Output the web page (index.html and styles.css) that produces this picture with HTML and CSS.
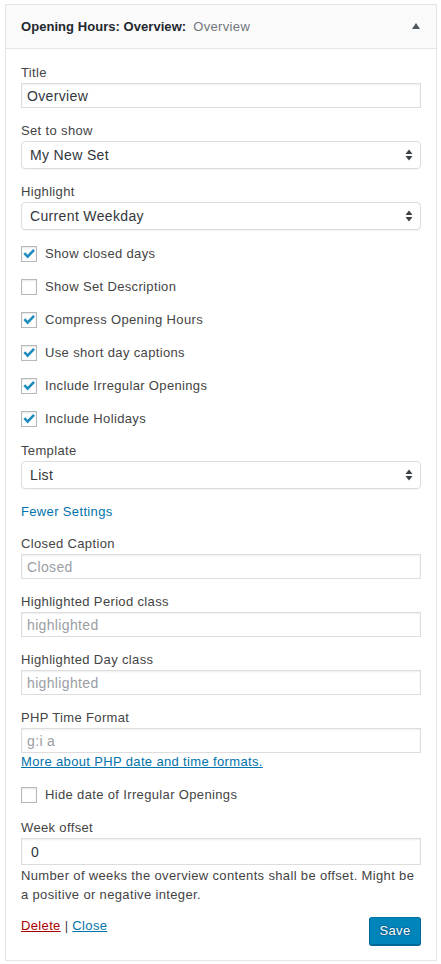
FILE: index.html
```html
<!DOCTYPE html>
<html>
<head>
<meta charset="utf-8">
<link rel="stylesheet" href="styles.css">
</head>
<body>
<div class="widget">
  <div class="widget-top">
    <h3 class="widget-title">Opening Hours: Overview:<span class="in-title">Overview</span></h3>
    <span class="toggle"></span>
  </div>
  <div class="widget-inside">
    <div class="field first">
      <label>Title</label>
      <input class="text" type="text" value="Overview">
    </div>
    <div class="field">
      <label>Set to show</label>
      <div class="select"><span>My New Set</span><svg class="updown" width="8" height="12" viewBox="0 0 8 12"><path d="M4 0.5 L7.5 5 H0.5 Z M4 11.5 L7.5 7 H0.5 Z" fill="#3c4146"/></svg></div>
    </div>
    <div class="field">
      <label>Highlight</label>
      <div class="select"><span>Current Weekday</span><svg class="updown" width="8" height="12" viewBox="0 0 8 12"><path d="M4 0.5 L7.5 5 H0.5 Z M4 11.5 L7.5 7 H0.5 Z" fill="#3c4146"/></svg></div>
    </div>
    <div class="check checked"><span class="box"><svg width="14" height="14" viewBox="0 0 14 14"><path d="M1.4 7.1 L3.3 5.3 L5.6 7.8 L11.1 2 L13 3.8 L5.6 11.6 Z" fill="#1e8cbe"/></svg></span><span>Show closed days</span></div>
    <div class="check"><span class="box"></span><span>Show Set Description</span></div>
    <div class="check checked"><span class="box"><svg width="14" height="14" viewBox="0 0 14 14"><path d="M1.4 7.1 L3.3 5.3 L5.6 7.8 L11.1 2 L13 3.8 L5.6 11.6 Z" fill="#1e8cbe"/></svg></span><span>Compress Opening Hours</span></div>
    <div class="check checked"><span class="box"><svg width="14" height="14" viewBox="0 0 14 14"><path d="M1.4 7.1 L3.3 5.3 L5.6 7.8 L11.1 2 L13 3.8 L5.6 11.6 Z" fill="#1e8cbe"/></svg></span><span>Use short day captions</span></div>
    <div class="check checked"><span class="box"><svg width="14" height="14" viewBox="0 0 14 14"><path d="M1.4 7.1 L3.3 5.3 L5.6 7.8 L11.1 2 L13 3.8 L5.6 11.6 Z" fill="#1e8cbe"/></svg></span><span>Include Irregular Openings</span></div>
    <div class="check checked"><span class="box"><svg width="14" height="14" viewBox="0 0 14 14"><path d="M1.4 7.1 L3.3 5.3 L5.6 7.8 L11.1 2 L13 3.8 L5.6 11.6 Z" fill="#1e8cbe"/></svg></span><span>Include Holidays</span></div>
    <div class="field">
      <label>Template</label>
      <div class="select"><span>List</span><svg class="updown" width="8" height="12" viewBox="0 0 8 12"><path d="M4 0.5 L7.5 5 H0.5 Z M4 11.5 L7.5 7 H0.5 Z" fill="#3c4146"/></svg></div>
    </div>
    <div class="field line"><a class="plain-link" href="#">Fewer Settings</a></div>
    <div class="field">
      <label>Closed Caption</label>
      <input class="text" type="text" placeholder="Closed">
    </div>
    <div class="field">
      <label>Highlighted Period class</label>
      <input class="text" type="text" placeholder="highlighted">
    </div>
    <div class="field">
      <label>Highlighted Day class</label>
      <input class="text" type="text" placeholder="highlighted">
    </div>
    <div class="field">
      <label>PHP Time Format</label>
      <input class="text" type="text" placeholder="g:i a">
      <a class="under-link" href="#">More about PHP date and time formats.</a>
    </div>
    <div class="check"><span class="box"></span><span>Hide date of Irregular Openings</span></div>
    <div class="field week">
      <label>Week offset</label>
      <input class="text number" type="text" value="0">
      <p class="desc">Number of weeks the overview contents shall be offset. Might be a positive or negative integer.</p>
    </div>
    <div class="controls">
      <div class="links"><a class="delete" href="#">Delete</a> | <a class="close" href="#">Close</a></div>
      <button class="save">Save</button>
    </div>
  </div>
</div>
</body>
</html>
```
FILE: styles.css
```css
html, body {
  margin: 0;
  padding: 0;
  background: #fff;
}
body {
  font-family: "Liberation Sans", Arial, sans-serif;
  font-size: 13px;
  color: #444;
  letter-spacing: 0.35px;
}
.widget {
  margin: 4px 4px 0 5px;
  border: 1px solid #e5e5e5;
  box-shadow: 0 1px 1px rgba(0,0,0,0.04);
  background: #fff;
}
.widget-top {
  height: 43px;
  background: #fafafa;
  border-bottom: 1px solid #e5e5e5;
  display: flex;
  align-items: center;
  justify-content: space-between;
  padding: 0 16px 0 15px;
}
.widget-title {
  margin: 0;
  font-size: 13px;
  font-weight: bold;
  color: #23282d;
  line-height: 17px;
  letter-spacing: 0.05px;
}
.in-title {
  font-weight: normal;
  color: #72777c;
  margin-left: 7px;
  letter-spacing: 0.35px;
}
.toggle {
  width: 0;
  height: 0;
  border-left: 4px solid transparent;
  border-right: 4px solid transparent;
  border-bottom: 6px solid #50575e;
  margin-top: -2px;
}
.widget-inside {
  padding: 15px 15px 15px 15px;
}
.field {
  margin-top: 14px;
}
.field.first {
  margin-top: 0;
}
.field label {
  display: block;
  line-height: 18px;
  margin-bottom: 1px;
  color: #444;
}
.text {
  display: block;
  box-sizing: border-box;
  width: 100%;
  height: 25px;
  margin: 0;
  padding: 0 5px;
  border: 1px solid #ddd;
  box-shadow: inset 0 1px 2px rgba(0,0,0,0.07);
  font-family: inherit;
  font-size: 14px;
  letter-spacing: 0.35px;
  color: #32373c;
  background: #fff;
  outline: none;
}
.text::placeholder {
  color: #9a9ea3;
}
.number {
  height: 27px;
  padding-left: 9px;
}
.select {
  box-sizing: border-box;
  height: 28px;
  border: 1px solid #dcdcdc;
  border-radius: 4px;
  background: #fff;
  box-shadow: 0 1px 1px rgba(0,0,0,0.04);
  display: flex;
  align-items: center;
  justify-content: space-between;
  padding: 0 7px 0 8px;
  font-size: 14px;
  color: #32373c;
}
.check {
  margin-top: 14px;
  height: 19px;
  line-height: 19px;
  display: flex;
  align-items: center;
  color: #444;
}
.box {
  box-sizing: border-box;
  width: 16px;
  height: 16px;
  border: 1px solid #b4b9be;
  box-shadow: inset 0 1px 2px rgba(0,0,0,0.1);
  background: #fff;
  margin-right: 8px;
  display: flex;
  align-items: center;
  justify-content: center;
}
.line {
  line-height: 18px;
}
.plain-link {
  color: #0073aa;
  text-decoration: none;
}
.under-link {
  display: block;
  line-height: 18px;
  color: #0073aa;
  text-decoration: underline;
}
.week {
  margin-top: 15px;
}
.desc {
  margin: 1px 0 0 0;
  line-height: 19px;
  color: #444;
}
.controls {
  margin-top: 13px;
  display: flex;
  justify-content: space-between;
  align-items: flex-start;
}
.links {
  line-height: 18px;
  color: #444;
}
.delete {
  color: #a00;
  text-decoration: underline;
}
.close {
  color: #0073aa;
  text-decoration: underline;
}
.save {
  box-sizing: border-box;
  height: 28px;
  width: 52px;
  padding: 0 0 1px 0;
  border: 1px solid;
  border-color: #0073aa #006799 #006799;
  border-radius: 3px;
  background: #0085ba;
  box-shadow: 0 1px 0 #006799;
  color: #fff;
  font-family: inherit;
  font-size: 13px;
  letter-spacing: 0.35px;
  text-shadow: 0 -1px 1px #006799, 1px 0 1px #006799, 0 1px 1px #006799, -1px 0 1px #006799;
}
```
